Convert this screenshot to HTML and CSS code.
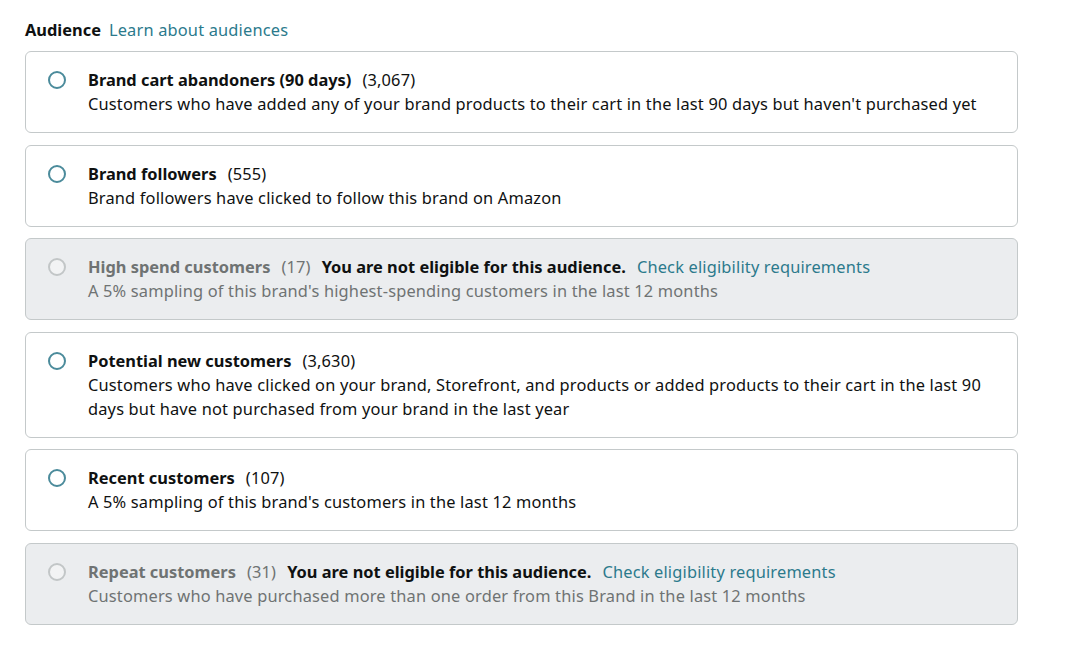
FILE: index.html
```html
<!DOCTYPE html>
<html lang="en">
  <head>
    <meta charset="UTF-8">
    <title>Audience</title>
    <link rel="stylesheet" href="styles.css">
  </head>
  <body>
    <div class="audience">
      <div class="heading">
        <span class="label">Audience</span>
        <a href="#" class="link">Learn about audiences</a>
      </div>

      <div class="option">
        <span class="radio"></span>
        <div class="text">
          <div class="title-line">
            <span class="name">Brand cart abandoners (90 days)</span>
            <span class="count">(3,067)</span>
          </div>
          <div class="desc">Customers who have added any of your brand products to their cart in the last 90 days but haven't purchased yet</div>
        </div>
      </div>

      <div class="option">
        <span class="radio"></span>
        <div class="text">
          <div class="title-line">
            <span class="name">Brand followers</span>
            <span class="count">(555)</span>
          </div>
          <div class="desc">Brand followers have clicked to follow this brand on Amazon</div>
        </div>
      </div>

      <div class="option disabled">
        <span class="radio"></span>
        <div class="text">
          <div class="title-line">
            <span class="name">High spend customers</span>
            <span class="count">(17)</span>
            <span class="warn">You are not eligible for this audience.</span>
            <a href="#" class="link">Check eligibility requirements</a>
          </div>
          <div class="desc">A 5% sampling of this brand's highest-spending customers in the last 12 months</div>
        </div>
      </div>

      <div class="option">
        <span class="radio"></span>
        <div class="text">
          <div class="title-line">
            <span class="name">Potential new customers</span>
            <span class="count">(3,630)</span>
          </div>
          <div class="desc">Customers who have clicked on your brand, Storefront, and products or added products to their cart in the last 90 days but have not purchased from your brand in the last year</div>
        </div>
      </div>

      <div class="option">
        <span class="radio"></span>
        <div class="text">
          <div class="title-line">
            <span class="name">Recent customers</span>
            <span class="count">(107)</span>
          </div>
          <div class="desc">A 5% sampling of this brand's customers in the last 12 months</div>
        </div>
      </div>

      <div class="option disabled">
        <span class="radio"></span>
        <div class="text">
          <div class="title-line">
            <span class="name">Repeat customers</span>
            <span class="count">(31)</span>
            <span class="warn">You are not eligible for this audience.</span>
            <a href="#" class="link">Check eligibility requirements</a>
          </div>
          <div class="desc">Customers who have purchased more than one order from this Brand in the last 12 months</div>
        </div>
      </div>
    </div>
  </body>
</html>
```

FILE: styles.css
```css
body {
  margin: 0;
  background-color: #ffffff;
  color: #0f1111;
  font-family: "Noto Sans", "Open Sans", Arial, sans-serif;
  font-size: 16.4px;
  line-height: 24px;
  letter-spacing: 0.17px;
}
.audience {
  width: 993px;
  padding: 18px 0 0 25px;
  display: flex;
  flex-direction: column;
  gap: 11.5px;
}
.heading {
  display: flex;
  gap: 8px;
  margin-bottom: -2.5px;
}
.label {
  font-weight: bold;
  letter-spacing: 0;
}
.link {
  color: #2b7a8c;
  text-decoration: none;
}
.option {
  display: flex;
  align-items: flex-start;
  border: 1px solid #c4c9ca;
  border-radius: 6px;
  padding: 16px 20px 16px 22px;
  background-color: #ffffff;
}
.radio {
  flex: none;
  width: 14px;
  height: 14px;
  border: 2px solid #4b8b9b;
  border-radius: 50%;
  margin: 3px 22px 0 0;
}
.text {
  flex: 1;
}
.title-line {
  display: flex;
  gap: 11px;
  align-items: baseline;
}
.name {
  font-weight: bold;
  letter-spacing: 0;
}
.warn {
  font-weight: bold;
  letter-spacing: 0;
  color: #0f1111;
}
.disabled {
  background-color: #ebedef;
  color: #6f7373;
}
.disabled .radio {
  border-color: #c2c6c7;
  background-color: #f2f3f4;
}
```
